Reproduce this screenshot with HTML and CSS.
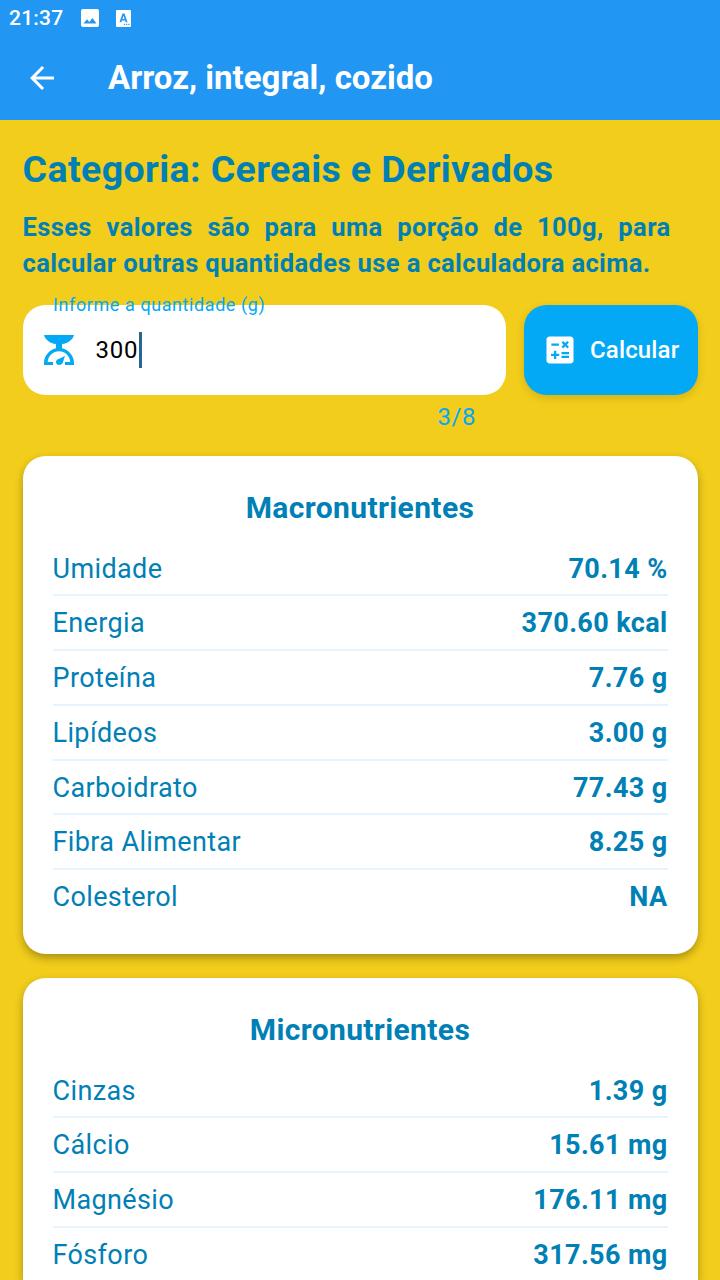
FILE: index.html
```html
<!DOCTYPE html>
<html lang="pt-BR">
<head>
<meta charset="utf-8">
<title>Arroz, integral, cozido</title>
<link rel="stylesheet" href="styles.css">
</head>
<body>
<header class="header">
  <div class="status-bar">
    <span class="clock">21:37</span>
    <svg class="status-image" viewBox="0 0 18 18"><path fill="#fff" fill-rule="evenodd" d="M2 0H16Q18 0 18 2V16Q18 18 16 18H2Q0 18 0 16V2Q0 0 2 0ZM2.500 14.500H15.500L11.500 9L8.300 13L6 10.300Z"/></svg>
    <svg class="status-lang" viewBox="0 0 15 17"><path fill="#fff" fill-rule="evenodd" d="M1 0H14Q15 0 15 1V16Q15 17 14 17H1Q0 17 0 16V1Q0 0 1 0ZM6.500 3.500L3.500 12.300H5.300L5.900 10.500H9.100L9.700 12.300H11.500L8.500 3.500ZM7.500 5.700L8.600 9H6.400ZM7.900 13.700V15H9.100V13.700ZM10.100 13.700V15H11.300V13.700ZM12.300 13.700V15H13.500V13.700Z"/></svg>
  </div>
  <div class="app-bar">
    <svg class="back" viewBox="0 0 24 24"><path fill="#fff" d="M20 11H7.830l5.590-5.590L12 4l-8 8 8 8 1.410-1.410L7.830 13H20z"/></svg>
    <h1 class="title">Arroz, integral, cozido</h1>
  </div>
</header>
<main class="content">
  <h2 class="category">Categoria: Cereais e Derivados</h2>
  <p class="note">Esses valores são para uma porção de 100g, para calcular outras quantidades use a calculadora acima.</p>
  <div class="calculator">
    <div class="field-group">
      <div class="field">
        <span class="label">Informe a quantidade (g)</span>
        <svg class="scale" viewBox="0 0 90 90"><path fill="#03a9f4" d="M0 0H90C86 15 72 25 54 27V40C75 45 90 63 90 85V90H63V81H79C77 62 63 49 45 49S13 62 11 81H27V90H0V85C0 63 15 45 36 40V27C18 25 4 15 0 0Z"/><path fill="#03a9f4" d="M63 63L56 84C51 93 36 91 36 81C36 77 39 74 42 73Z"/></svg>
        <span class="value">300</span><span class="caret"></span>
      </div>
      <span class="counter">3/8</span>
    </div>
    <button class="button">
      <svg class="calc-icon" viewBox="0 0 24 24"><path fill="#fff" d="M19 3H5c-1.100 0-2 .9-2 2v14c0 1.100.9 2 2 2h14c1.100 0 2-.9 2-2V5c0-1.100-.9-2-2-2zm-5.970 4.060L14.090 6l1.410 1.410L16.910 6l1.060 1.060-1.410 1.410 1.410 1.410-1.060 1.060-1.410-1.400-1.410 1.410-1.060-1.060 1.410-1.410-1.410-1.420zm-6.780.66h5v1.500h-5v-1.500zM11.500 16h-2v2H8v-2H6v-1.500h2v-2h1.500v2h2V16zm6.500 1.250h-5v-1.500h5v1.500zm0-2.500h-5v-1.500h5v1.500z"/></svg>
      <span>Calcular</span>
    </button>
  </div>
  <section class="card">
    <h3 class="card-title">Macronutrientes</h3>
    <div class="row"><span>Umidade</span><b>70.14 %</b></div>
    <div class="row"><span>Energia</span><b>370.60 kcal</b></div>
    <div class="row"><span>Proteína</span><b>7.76 g</b></div>
    <div class="row"><span>Lipídeos</span><b>3.00 g</b></div>
    <div class="row"><span>Carboidrato</span><b>77.43 g</b></div>
    <div class="row"><span>Fibra Alimentar</span><b>8.25 g</b></div>
    <div class="row"><span>Colesterol</span><b>NA</b></div>
  </section>
  <section class="card last">
    <h3 class="card-title">Micronutrientes</h3>
    <div class="row"><span>Cinzas</span><b>1.39 g</b></div>
    <div class="row"><span>Cálcio</span><b>15.61 mg</b></div>
    <div class="row"><span>Magnésio</span><b>176.11 mg</b></div>
    <div class="row"><span>Fósforo</span><b>317.56 mg</b></div>
  </section>
</main>
</body>
</html>
```
FILE: styles.css
```css
* { box-sizing: border-box; }
body {
  margin: 0;
  height: 1280px;
  overflow: hidden;
  display: flex;
  flex-direction: column;
  background: #f2cd1b;
  color: #0080b5;
  font-family: Roboto, sans-serif;
}
h1, h2, h3, p { margin: 0; }
svg { display: block; flex: none; }
.header { flex: none; height: 120px; background: #2196f3; color: #fff; }
.status-bar { display: flex; align-items: center; height: 36.500px; padding-left: 9px; }
.clock { width: 72.400px; font-size: 21px; font-weight: 500; letter-spacing: 0.2px; }
.status-image { width: 18px; height: 18px; }
.status-lang { width: 15px; height: 17px; margin-left: 16.600px; }
.app-bar { display: flex; align-items: center; height: 83px; padding-left: 24px; }
.back { width: 36px; height: 36px; }
.title { margin-left: 48px; font-size: 33px; font-weight: 700; line-height: 40px; letter-spacing: 0; white-space: nowrap; }
.content { display: flex; flex-direction: column; height: 1160px; padding: 26.500px 22.500px 0; }
.category { font-size: 37.500px; font-weight: 700; line-height: 45px; letter-spacing: 0.400px; white-space: nowrap; }
.note { width: 648px; margin-top: 17px; font-size: 25.500px; font-weight: 700; line-height: 36px; letter-spacing: 0.390px; text-align: justify; }
.calculator { flex: none; display: flex; gap: 18px; height: 151.500px; margin-top: 24px; }
.field-group { flex: 1; display: flex; flex-direction: column; }
.field { position: relative; display: flex; align-items: center; height: 90px; padding-left: 21px; border-radius: 22.500px; background: #fff; color: #000; }
.label { position: absolute; left: 30.600px; top: -11px; font-size: 18px; line-height: 21px; letter-spacing: 0.580px; color: #03a9f4; white-space: nowrap; }
.scale { width: 30px; height: 30px; }
.value { margin-left: 22px; font-size: 24px; letter-spacing: 0.750px; }
.caret { width: 3px; height: 36px; margin-left: 0.500px; background: #2a6592; }
.counter { align-self: flex-end; margin: 8px 30px 0 0; font-size: 24px; line-height: 28px; letter-spacing: 0.562px; color: #03a9f4; }
.button { display: flex; align-items: center; gap: 12px; width: 173.500px; height: 90px; padding: 0 0 0 18px; border: 0; border-radius: 22.500px; background: #03a9f4; color: #fff; font: 500 24px Roboto, sans-serif; letter-spacing: 0.150px; box-shadow: 0 3px 8px rgba(0, 0, 0, 0.13); }
.calc-icon { width: 36px; height: 36px; }
.card { flex: none; height: 498px; margin-bottom: 24px; padding: 31px 30px 0; border-radius: 22.500px; background: #fff; box-shadow: 0 4px 9px rgba(0, 0, 0, 0.3); }
.card.last { flex: 1; height: auto; min-height: 0; margin: 0; border-radius: 22.500px 22.500px 0 0; }
.card-title { margin-bottom: 12.600px; font-size: 30px; font-weight: 700; line-height: 42px; letter-spacing: 0.375px; text-align: center; }
.row { display: flex; justify-content: space-between; height: 54.750px; padding-top: 9px; font-size: 27px; line-height: 36px; letter-spacing: 0.375px; border-bottom: 2px solid #e7f4fe; }
.row b { font-weight: 700; }
.row:last-child { border-bottom: 0; }
```
